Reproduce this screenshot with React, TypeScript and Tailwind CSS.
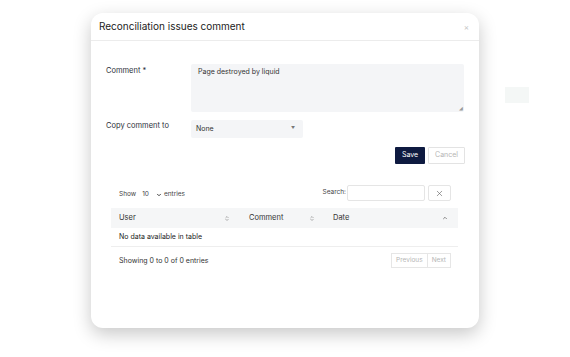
import { X, ChevronDown, ChevronsUpDown, ChevronUp } from "lucide-react";

export default function App() {
  return (
    <div
      className="w-[570px] h-[357px] bg-white flex items-start overflow-hidden text-[#2b2f38]"
      style={{ fontFamily: "Inter, 'Noto Sans', sans-serif" }}
    >
      <div className="ml-[91px] mt-[13px] w-[388px] h-[315px] bg-white rounded-[12px] shadow-[0_6px_18px_rgba(0,0,0,0.22)] flex flex-col">
        <div className="h-[28px] px-[8px] flex items-center justify-between border-b border-[#ececec]">
          <h1 className="text-[10px] text-[#222]">Reconciliation issues comment</h1>
          <span className="text-[8px] text-[#c4c4c4] mr-[2px]">×</span>
        </div>

        <div className="px-[15px] pt-[23px] flex flex-col">
          <div className="flex">
            <label className="w-[85px] text-[7.5px] pt-[1px]">Comment *</label>
            <div className="relative w-[273px] h-[48px] bg-[#f4f5f7] rounded-[2px] px-[7px] pt-[3px] text-[7px] text-[#333]">
              Page destroyed by liquid
              <span className="absolute right-[1px] bottom-[0px] text-[5px] text-[#999]">◢</span>
            </div>
          </div>

          <div className="flex items-center mt-[8px]">
            <label className="w-[85px] text-[7.5px] -mt-[6px]">Copy comment to</label>
            <div className="w-[112px] h-[18px] bg-[#f4f5f7] rounded-[2px] px-[5px] flex items-center justify-between text-[7px] text-[#333]">
              <span>None</span>
              <span className="text-[4px] text-[#777] mr-[3px] -mt-[3px]">▼</span>
            </div>
          </div>

          <div className="flex justify-end gap-[3px] mt-[9px] mr-[-1px]">
            <button className="w-[30px] h-[17px] bg-[#0e1a40] text-white text-[7px] rounded-[1px]">Save</button>
            <button className="w-[37px] h-[17px] border border-[#e3e3e3] text-[#b5b5b5] text-[7px] rounded-[1px]">Cancel</button>
          </div>

          <div className="mx-[5px] mt-[21px] w-[347px]">
            <div className="flex items-center justify-between h-[16px] text-[6.5px] text-[#444] pr-[7px]">
              <div className="flex items-center pl-[8px] mt-[3px]">
                <span>Show</span>
                <span className="ml-[6px]">10</span>
                <ChevronDown className="w-[6px] h-[6px] ml-[7px]" strokeWidth={4} />
                <span className="ml-[2px]">entries</span>
              </div>
              <div className="flex items-center">
                <span>Search:</span>
                <div className="w-[78px] h-[16px] border border-[#e5e5e5] rounded-[2px] ml-[1px]" />
                <div className="w-[23px] h-[16px] border border-[#e5e5e5] rounded-[2px] ml-[3px] flex items-center justify-center">
                  <X className="w-[9px] h-[9px] text-[#555]" strokeWidth={1.5} />
                </div>
              </div>
            </div>

            <div className="mt-[7px] h-[20px] bg-[#f5f6f7] flex items-center text-[7.5px] text-[#333]">
              <div className="w-[130px] pl-[8px] pr-[11px] flex items-center justify-between">
                <span>User</span>
                <ChevronsUpDown className="w-[6px] h-[7px] text-[#666]" strokeWidth={2} />
              </div>
              <div className="w-[92px] pl-[8px] pr-[18px] flex items-center justify-between">
                <span>Comment</span>
                <ChevronsUpDown className="w-[6px] h-[7px] text-[#666]" strokeWidth={2} />
              </div>
              <div className="flex-1 pl-[0px] pr-[10px] flex items-center justify-between">
                <span>Date</span>
                <ChevronUp className="w-[6px] h-[6px] text-[#666]" strokeWidth={3} />
              </div>
            </div>

            <div className="h-[19px] flex items-center pl-[8px] text-[7px] text-[#222] border-b border-[#eeeeee]">
              No data available in table
            </div>

            <div className="mt-[6px] flex items-center justify-between text-[7px] text-[#333] pr-[7px]">
              <span className="pl-[8px] mt-[2px]">Showing 0 to 0 of 0 entries</span>
              <div className="flex">
                <div className="h-[15px] px-[4px] border border-[#e6e6e6] text-[#b5b5b5] text-[6.5px] flex items-center">Previous</div>
                <div className="h-[15px] px-[4px] border border-l-0 border-[#e6e6e6] text-[#b5b5b5] text-[6.5px] flex items-center">Next</div>
              </div>
            </div>
          </div>
        </div>
      </div>

      <div className="ml-[26px] mt-[87px] w-[24px] h-[16px] bg-[#f4f7f6]" />
    </div>
  );
}
